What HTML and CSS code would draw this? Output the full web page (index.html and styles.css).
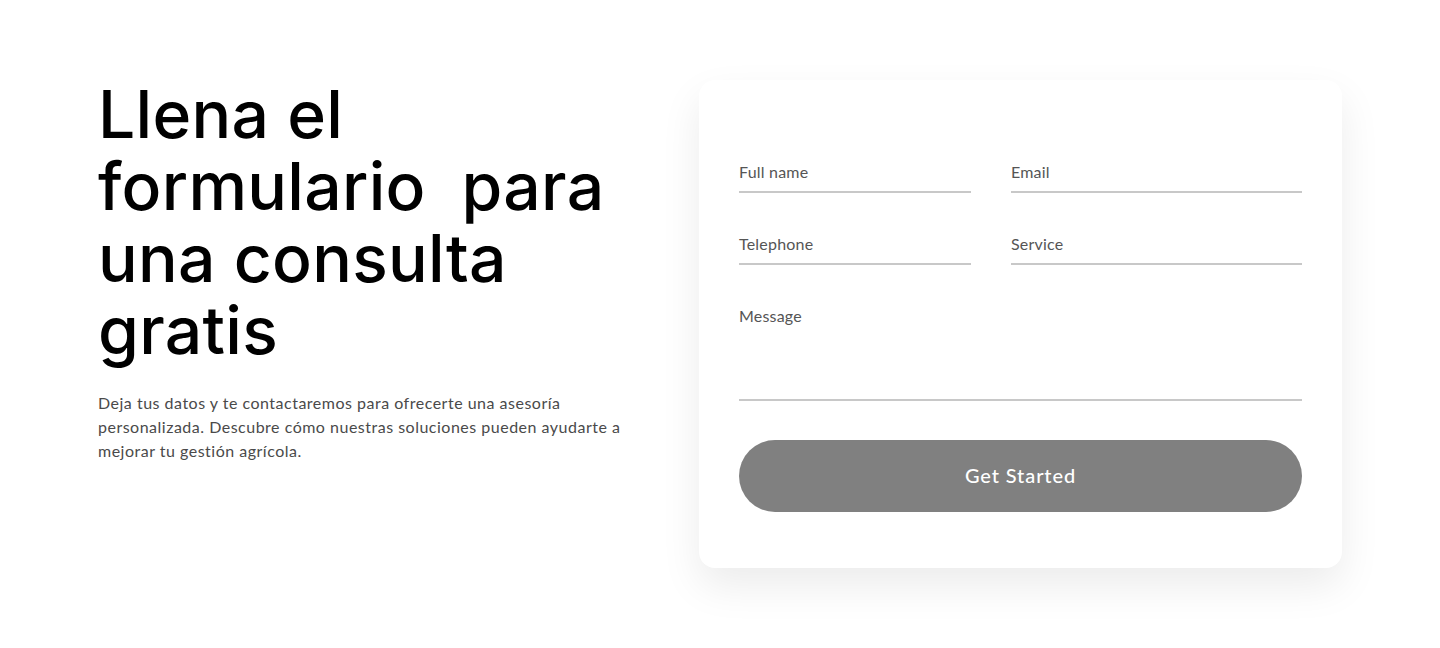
FILE: index.html
```html
<!DOCTYPE html>
<html lang="es">
<head>
<meta charset="utf-8">
<title>Consulta gratis</title>
<link rel="stylesheet" href="styles.css">
</head>
<body>
<main class="section">
  <div class="intro">
    <h1 class="title">Llena el formulario&nbsp; para una consulta gratis</h1>
    <p class="lead">Deja tus datos y te contactaremos para ofrecerte una asesoría personalizada. Descubre cómo nuestras soluciones pueden ayudarte a mejorar tu gestión agrícola.</p>
  </div>
  <form class="card">
    <div class="fields">
      <label class="field"><span class="label">Full name</span></label>
      <label class="field"><span class="label">Email</span></label>
      <label class="field"><span class="label">Telephone</span></label>
      <label class="field"><span class="label">Service</span></label>
      <label class="field field-wide field-message"><span class="label">Message</span></label>
    </div>
    <button type="button" class="btn">Get Started</button>
  </form>
</main>
</body>
</html>
```
FILE: styles.css
```css
* { box-sizing: border-box; }
html, body { margin: 0; padding: 0; background: #ffffff; }
body { font-family: "Lato", "Open Sans", sans-serif; }

.section {
  width: 1244px;
  margin: 0 auto;
  padding: 80px 0 80px;
  display: flex;
  align-items: flex-start;
  gap: 57px;
}

.intro { flex: 1; margin-top: -2px; }

.title {
  margin: 0;
  font-family: "Inter", sans-serif;
  font-weight: 500;
  font-size: 66px;
  line-height: 72px;
  color: #000;
  letter-spacing: 0.3px;
}

.lead {
  margin: 25px 0 0;
  font-family: "Lato", sans-serif;
  font-size: 16px;
  line-height: 24px;
  letter-spacing: 0.5px;
  color: #4a4a4a;
  width: 540px;
}

.card {
  width: 643px;
  height: 488px;
  background: #fff;
  border-radius: 16px;
  box-shadow: 0 18px 40px rgba(0, 0, 0, 0.08);
  padding: 81px 40px 56px;
  display: flex;
  flex-direction: column;
}

.fields {
  display: grid;
  grid-template-columns: 232px 1fr;
  column-gap: 40px;
  row-gap: 40px;
}

.field {
  display: block;
  height: 32px;
  border-bottom: 2px solid #c8c8c8;
  padding-top: 1px;
}
.field-wide { grid-column: 1 / -1; }
.field-message { height: 96px; }

.label {
  display: block;
  font-size: 16px;
  line-height: 20px;
  letter-spacing: 0.2px;
  color: #555;
}

.btn {
  margin-top: 39px;
  height: 72px;
  width: 100%;
  border: 0;
  border-radius: 36px;
  background: #808080;
  color: #fff;
  font-family: "Lato", sans-serif;
  font-weight: 500;
  font-size: 20px;
  letter-spacing: 0.9px;
  padding: 0 0 2px;
}
```
